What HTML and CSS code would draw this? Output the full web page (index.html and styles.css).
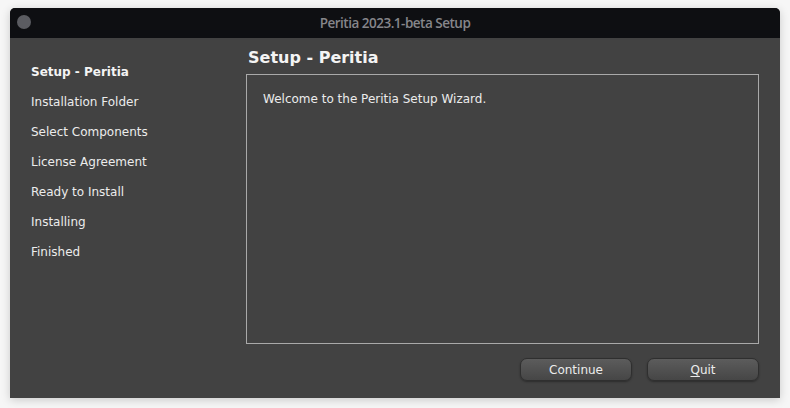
FILE: index.html
```html
<!DOCTYPE html>
<html>
<head>
<meta charset="utf-8">
<link rel="stylesheet" href="styles.css">
</head>
<body>
<div class="window">
  <div class="titlebar">
    <span class="close"></span>
    <span class="title">Peritia 2023.1-beta Setup</span>
  </div>
  <div class="content">
    <ul class="steps">
      <li class="active">Setup - Peritia</li>
      <li>Installation Folder</li>
      <li>Select Components</li>
      <li>License Agreement</li>
      <li>Ready to Install</li>
      <li>Installing</li>
      <li>Finished</li>
    </ul>
    <div class="main">
      <h1 class="heading">Setup - Peritia</h1>
      <div class="panel">
        <p>Welcome to the Peritia Setup Wizard.</p>
      </div>
      <div class="buttons">
        <button class="btn">Continue</button>
        <button class="btn"><u>Q</u>uit</button>
      </div>
    </div>
  </div>
</div>
</body>
</html>
```

FILE: styles.css
```css
html, body {
  margin: 0;
  padding: 0;
  background: #f6f6f6;
  width: 790px;
  height: 408px;
  overflow: hidden;
}
body {
  padding: 8px 10px 10px 10px;
  box-sizing: border-box;
  font-family: "DejaVu Sans", sans-serif;
}
.window {
  width: 770px;
  height: 390px;
  background: #424242;
  border-radius: 5px 5px 0 0;
  box-shadow: 0 2px 10px rgba(0,0,0,0.18);
  display: flex;
  flex-direction: column;
  overflow: hidden;
}
.titlebar {
  height: 30px;
  background: #0e0f12;
  position: relative;
  display: flex;
  align-items: center;
  justify-content: center;
}
.close {
  position: absolute;
  left: 7px;
  top: 7px;
  width: 14px;
  height: 14px;
  border-radius: 50%;
  background: #5b5c61;
}
.title {
  color: #86868a;
  font-family: "Open Sans", sans-serif;
  font-size: 13.5px;
  font-weight: 600;
  letter-spacing: -0.5px;
}
.content {
  flex: 1;
  display: flex;
}
.steps {
  list-style: none;
  margin: 0;
  padding: 19px 0 0 21px;
  width: 215px;
}
.steps li {
  height: 30px;
  line-height: 30px;
  font-size: 12px;
  color: #ececec;
}
.steps li.active {
  font-weight: bold;
  color: #f4f4f4;
}
.main {
  flex: 1;
  padding: 0 21px 0 0;
  display: flex;
  flex-direction: column;
}
.heading {
  margin: 0;
  padding: 0 0 0 2px;
  height: 36px;
  line-height: 40px;
  font-size: 16px;
  font-weight: bold;
  color: #f4f4f4;
}
.panel {
  height: 270px;
  border: 1px solid #a9a9a9;
  box-sizing: border-box;
}
.panel p {
  margin: 0;
  padding: 15px 0 0 16px;
  font-size: 12px;
  line-height: 18px;
  color: #ececec;
}
.buttons {
  display: flex;
  justify-content: flex-end;
  gap: 15px;
  padding-top: 14px;
}
.btn {
  width: 112px;
  height: 23px;
  border-radius: 7px;
  border: 1px solid #2f2f2f;
  background: linear-gradient(#5c5c5c, #464646);
  box-shadow: 0 1px 2px rgba(0,0,0,0.35);
  color: #ececec;
  font-family: "DejaVu Sans", sans-serif;
  font-size: 12px;
  padding: 0;
  margin: 0;
}
.btn u {
  text-decoration-thickness: 1px;
  text-underline-offset: 2px;
}
```
